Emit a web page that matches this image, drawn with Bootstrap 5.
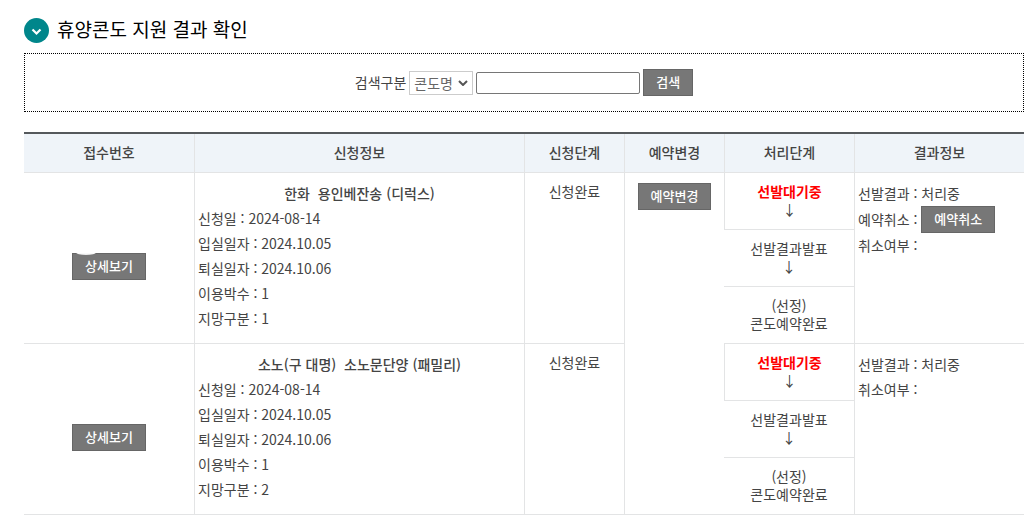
<!DOCTYPE html>
<html lang="ko">
<head>
<meta charset="utf-8">
<meta name="viewport" content="width=device-width, initial-scale=1">
<title>휴양콘도 지원 결과 확인</title>
<link rel="stylesheet" href="https://cdn.jsdelivr.net/npm/bootstrap@5.3.0/dist/css/bootstrap.min.css">
<style>
body { font-family: "Noto Sans CJK KR", sans-serif; font-size: 14px; line-height: 18px; color: #444; }
.page-wrap { padding: 16px 5px 12px 24px; }
.page-title { margin-bottom: 9px; font-size: 19px; font-weight: 400; line-height: 28px; color: #000; }
.title-text { padding-bottom: 2px; line-height: 26px; }
.search-box { gap: 3px; border: 1px dotted #000; padding: 15px 0; }
.search-box label { padding-bottom: 2px; }
.search-box .form-select { width: 64px; height: 24px; padding: 0 4px; border: 1px solid #ccc; font-size: 14px; line-height: 20px; color: #666;
  background: #fff url("data:image/svg+xml,%3Csvg xmlns='http://www.w3.org/2000/svg' viewBox='0 0 10 6'%3E%3Cpath d='M1 1l4 4 4-4' fill='none' stroke='%23555' stroke-width='2'/%3E%3C/svg%3E") no-repeat right 4px center / 10px 6px; }
.search-box .form-control { width: 164px; height: 22px; padding: 0 4px; border: 1px solid #767676; border-radius: 2px; font-size: 14px; }
.btn-gray { --bs-btn-color: #fff; --bs-btn-bg: #777; --bs-btn-border-color: #666; --bs-btn-hover-color: #fff; --bs-btn-hover-bg: #666;
  --bs-btn-padding-x: 12px; --bs-btn-font-size: 13px; --bs-btn-font-weight: 500; --bs-btn-line-height: 23px; --bs-btn-border-radius: 0; padding-top: 0; padding-bottom: 2px; white-space: nowrap; }
.result-table { table-layout: fixed; border-collapse: separate; border-spacing: 0; border-top: 2px solid #55595c; margin-top: 20px; }
.result-table th, .result-table td { border-bottom: 1px solid #e3e4e5; padding: 9px 0 11px; }
.result-table th + th, .result-table td + td { border-left: 1px solid #e3e4e5; }
.result-table th { background: #eff4f9; font-weight: 500; }
.result-table .info-cell { padding: 8px 3px 10px; line-height: 25px; }
.result-table .action-cell { padding-top: 10px; }
.condo-name { font-weight: 500; }
.wait-step { font-weight: 700; color: #f00; }
.receipt-no { min-height: 18px; }
.smudge::before { content: ""; position: absolute; left: 3px; top: -4px; width: 20px; height: 5px; border-radius: 50%; background: linear-gradient(#fff 60%, #e8e8e8); }
</style>
</head>
<body>
<main class="page-wrap">
  <h1 class="page-title d-flex align-items-center gap-2">
    <svg width="25" height="25" viewBox="0 0 25 25" aria-hidden="true"><circle cx="12.5" cy="12.5" r="12.5" fill="#00868b"/><path d="M8.5 11.5l4 4 4-4" fill="none" stroke="#fff" stroke-width="2.2"/></svg>
    <span class="title-text">휴양콘도 지원 결과 확인</span>
  </h1>
  <form class="search-box d-flex justify-content-center align-items-center">
    <label for="kind">검색구분</label>
    <select id="kind" class="form-select rounded-0"><option>콘도명</option></select>
    <input type="text" class="form-control" aria-label="검색어">
    <button type="button" class="btn btn-gray">검색</button>
  </form>
  <table class="result-table w-100 text-center">
    <colgroup><col style="width:17%"><col style="width:33%"><col style="width:10%"><col style="width:10%"><col style="width:13%"><col style="width:17%"></colgroup>
    <thead>
      <tr><th scope="col">접수번호</th><th scope="col">신청정보</th><th scope="col">신청단계</th><th scope="col">예약변경</th><th scope="col">처리단계</th><th scope="col">결과정보</th></tr>
    </thead>
    <tbody class="align-top">
      <tr>
        <td rowspan="3" class="align-middle"><div class="receipt-no"></div><button type="button" class="btn btn-gray position-relative smudge">상세보기</button></td>
        <td rowspan="3" class="info-cell text-start"><div class="condo-name text-center">한화&nbsp; 용인베잔송 (디럭스)</div>신청일 : 2024-08-14<br>입실일자 : 2024.10.05<br>퇴실일자 : 2024.10.06<br>이용박수 : 1<br>지망구분 : 1</td>
        <td rowspan="3">신청완료</td>
        <td rowspan="6" class="action-cell"><button type="button" class="btn btn-gray">예약변경</button></td>
        <td><span class="wait-step">선발대기중</span><br>↓</td>
        <td rowspan="3" class="info-cell text-start">선발결과 : 처리중<br><div class="d-flex align-items-center">예약취소 :&nbsp;<button type="button" class="btn btn-gray">예약취소</button></div>취소여부 :</td>
      </tr>
      <tr><td>선발결과발표<br>↓</td></tr>
      <tr><td>(선정)<br>콘도예약완료</td></tr>
      <tr>
        <td rowspan="3" class="align-middle"><div class="receipt-no"></div><button type="button" class="btn btn-gray">상세보기</button></td>
        <td rowspan="3" class="info-cell text-start"><div class="condo-name text-center">소노(구 대명)&nbsp; 소노문단양 (패밀리)</div>신청일 : 2024-08-14<br>입실일자 : 2024.10.05<br>퇴실일자 : 2024.10.06<br>이용박수 : 1<br>지망구분 : 2</td>
        <td rowspan="3">신청완료</td>
        <td><span class="wait-step">선발대기중</span><br>↓</td>
        <td rowspan="3" class="info-cell text-start">선발결과 : 처리중<br>취소여부 :</td>
      </tr>
      <tr><td>선발결과발표<br>↓</td></tr>
      <tr><td>(선정)<br>콘도예약완료</td></tr>
    </tbody>
  </table>
</main>
<script src="https://cdn.jsdelivr.net/npm/bootstrap@5.3.0/dist/js/bootstrap.bundle.min.js"></script>
</body>
</html>
